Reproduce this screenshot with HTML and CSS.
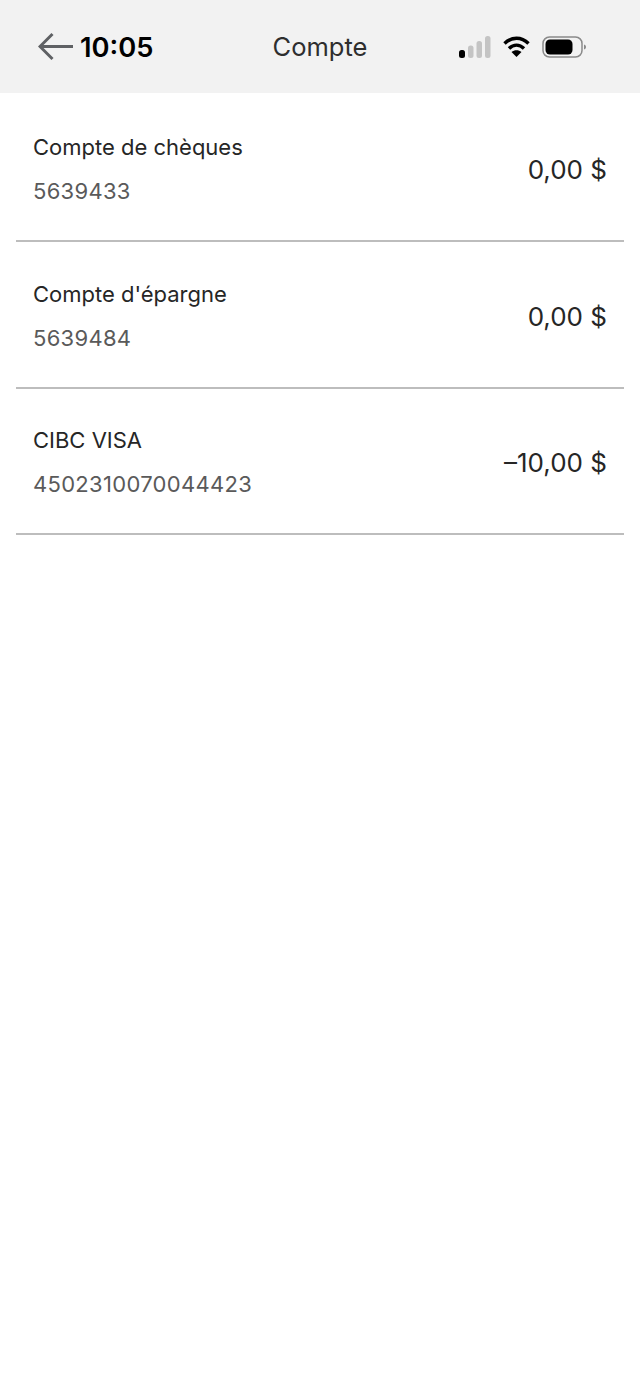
FILE: index.html
```html
<!doctype html>
<html>

<head>
    <title>Compte</title>
    <meta charset="utf-8">
    <link rel="stylesheet" href="styles.css">
</head>

<body>
    <div class="header">
        <div class="left">
            <svg class="back" width="36" height="32" viewBox="0 0 36 32">
                <path d="M2 15.500H35M14.500 3L2 15.500L14.500 28" fill="none" stroke="#5f6164" stroke-width="3"/>
            </svg>
            <span class="time">10:05</span>
        </div>
        <div class="title">Compte</div>
        <div class="status">
            <svg width="32" height="22" viewBox="0 0 32 22">
                <rect x="0" y="14" width="6" height="8" rx="2.500" fill="#000"/>
                <rect x="9" y="9.500" width="5.500" height="12.500" rx="2.500" fill="#c4c4c4"/>
                <rect x="17.500" y="5" width="5.500" height="17" rx="2.500" fill="#c4c4c4"/>
                <rect x="26" y="0" width="5.500" height="22" rx="2.500" fill="#c4c4c4"/>
            </svg>
            <svg class="wifi" width="27" height="21" viewBox="0 0 27 21">
                <path d="M1.500 7.500C8.500 .5 18.500 .5 25.500 7.500M6 12.500C10.500 8 16.500 8 21 12.500" fill="none" stroke="#000" stroke-width="3.400"/>
                <path d="M13.500 21L8.500 16C11.500 13.500 15.500 13.500 18.500 16Z" fill="#000"/>
            </svg>
            <svg width="44" height="22" viewBox="0 0 44 22">
                <rect x="1" y="1" width="39" height="20" rx="6.500" fill="none" stroke="#8a8a8a" stroke-width="1.500"/>
                <rect x="3.500" y="3.500" width="27" height="15" rx="4.500" fill="#000"/>
                <path d="M42 8.500C43.500 9 44 10 44 11C44 12 43.500 13 42 13.500Z" fill="#8a8a8a"/>
            </svg>
        </div>
    </div>

    <ul class="accounts">
        <li class="account">
            <div class="info">
                <div class="name">Compte de chèques</div>
                <div class="number">5639433</div>
            </div>
            <div class="amount">0,00 $</div>
        </li>
        <li class="account">
            <div class="info">
                <div class="name">Compte d'épargne</div>
                <div class="number">5639484</div>
            </div>
            <div class="amount">0,00 $</div>
        </li>
        <li class="account">
            <div class="info">
                <div class="name">CIBC VISA</div>
                <div class="number">4502310070044423</div>
            </div>
            <div class="amount">–10,00 $</div>
        </li>
    </ul>
</body>

</html>
```

FILE: styles.css
```css
* {
    box-sizing: border-box;
}

body {
    margin: 0;
    min-height: 1387px;
    background: #fff;
    font-family: Inter, "Liberation Sans", sans-serif;
    color: #262626;
}

.header {
    display: grid;
    grid-template-columns: 1fr auto 1fr;
    align-items: center;
    height: 93px;
    padding: 0 38px;
    background: #f2f2f2;
}

.left {
    display: flex;
    align-items: center;
    gap: 6px;
}

.time {
    padding-top: 2px;
    font-size: 27.300px;
    font-weight: 600;
    color: #000;
}

.title {
    font-size: 25.500px;
    color: #2e2e2e;
}

.status {
    display: flex;
    align-items: center;
    justify-content: flex-end;
    gap: 12px;
    padding-right: 16px;
}

.accounts {
    list-style: none;
    margin: 0 16px;
    padding: 2.500px 0 0;
}

.account {
    display: flex;
    justify-content: space-between;
    align-items: center;
    height: 146.500px;
    padding: 0 17px;
    border-bottom: 2px solid #bdbdbd;
}

.info {
    padding-top: 3px;
}

.name {
    font-size: 22px;
    line-height: 28px;
    margin-bottom: 16px;
}

.number {
    font-size: 22px;
    line-height: 28px;
    letter-spacing: .3px;
    color: #5a5a5a;
}

.amount {
    padding-top: 4px;
    font-size: 26px;
}
```
